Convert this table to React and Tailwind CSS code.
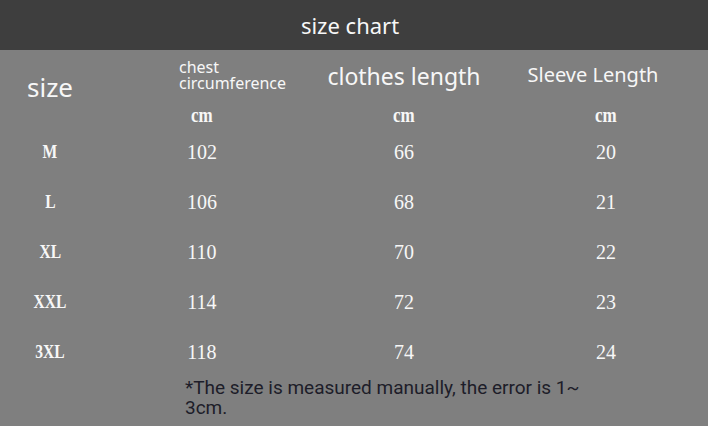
const rows = [
  { size: 'M', chest: '102', length: '66', sleeve: '20' },
  { size: 'L', chest: '106', length: '68', sleeve: '21' },
  { size: 'XL', chest: '110', length: '70', sleeve: '22' },
  { size: 'XXL', chest: '114', length: '72', sleeve: '23' },
  { size: '3XL', chest: '118', length: '74', sleeve: '24' },
];

const gridClass = 'grid grid-cols-[100px_204px_200px_204px]';
const sans = "font-['Noto_Sans',sans-serif]";
const serif = "font-['Liberation_Serif',serif]";

const App = () => {
  return (
    <div className="w-[708px] h-[426px] bg-[#7f7f7f] overflow-hidden text-[#f7f7f7]">
      <div
        className={`h-[50px] bg-[#3e3e3e] flex items-center justify-center ${sans} text-[22px] leading-none pr-[8px]`}
      >
        size chart
      </div>

      <div className={`${gridClass} h-[55px] ${sans}`}>
        <div className="mt-[22px] text-center text-[26px] leading-[30px]">size</div>
        <div className="mt-[9px] pl-[79px] text-[16px] leading-[16px]">
          <div>chest</div>
          <div>circumference</div>
        </div>
        <div className="mt-[13px] text-center text-[23px] leading-[26px]">clothes length</div>
        <div className="mt-[13px] pr-[26px] text-center text-[20px] leading-[24px]">
          Sleeve Length
        </div>
      </div>

      <div className={`${gridClass} h-[22px] ${serif} font-bold text-[20px] leading-[20px]`}>
        <div />
        <div className="text-center">
          <span className="inline-block scale-x-[0.85]">cm</span>
        </div>
        <div className="text-center">
          <span className="inline-block scale-x-[0.85]">cm</span>
        </div>
        <div className="text-center">
          <span className="inline-block scale-x-[0.85]">cm</span>
        </div>
      </div>

      {rows.map((row) => (
        <div key={row.size} className={`${gridClass} h-[50px] items-center ${serif} text-[20px]`}>
          <div className="text-center font-bold text-[19px]">
            <span className="inline-block scale-x-[0.82]">{row.size}</span>
          </div>
          <div className="text-center">{row.chest}</div>
          <div className="text-center">{row.length}</div>
          <div className="text-center">{row.sleeve}</div>
        </div>
      ))}

      <div
        className={`ml-[185px] mt-[1px] w-[410px] font-['Roboto',sans-serif] text-[19px] leading-[20px] text-[#1d1d29]`}
      >
        *The size is measured manually, the error is 1~ 3cm.
      </div>
    </div>
  );
};

export default App;
